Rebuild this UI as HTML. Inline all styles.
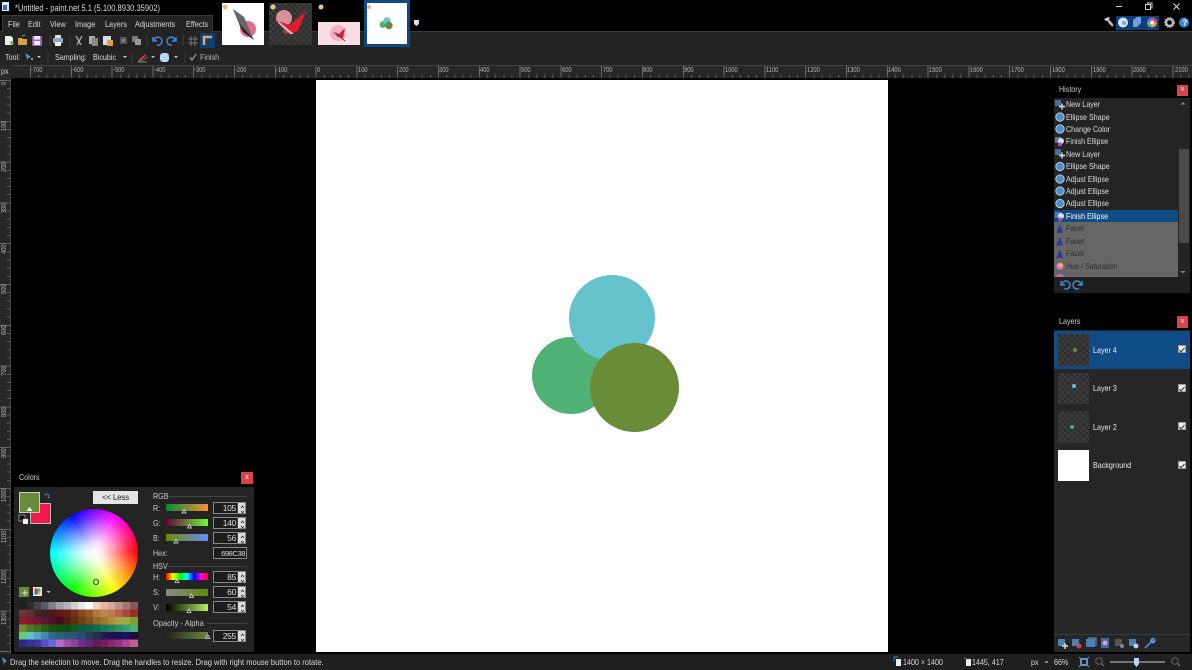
<!DOCTYPE html>
<html><head><meta charset="utf-8"><style>
html,body{margin:0;padding:0;background:#000;width:1192px;height:670px;overflow:hidden}
body{position:relative;font-family:"Liberation Sans",sans-serif;font-size:8.5px;color:#d8d8d8}
.a{position:absolute}
.t{position:absolute;white-space:nowrap;line-height:12px;transform:scaleX(.84);transform-origin:0 50%}
.rl{position:absolute;top:67px;font-size:7px;line-height:8px;color:#b4b4b4;transform:scaleX(.82);transform-origin:0 50%}
.vl{position:absolute;left:1px;font-size:7px;line-height:8px;color:#b4b4b4;transform:rotate(-90deg) scaleX(.82);transform-origin:0 0}
.h{position:absolute;left:1066px;white-space:nowrap;line-height:12px;color:#ddd;transform:scaleX(.84);transform-origin:0 50%}
.hi{position:absolute;left:1066px;white-space:nowrap;line-height:12px;color:#2c2c2c;font-style:italic;transform:scaleX(.84);transform-origin:0 50%}
.sp{position:absolute;left:213px;width:33px;height:12px;background:#1c1c1c;border:1px solid #888;box-sizing:border-box;text-align:right;line-height:11px;color:#ddd;padding-right:9px;font-size:8.5px;letter-spacing:-.3px}
.sp:after{content:"";position:absolute;right:0;top:0;bottom:0;width:7px;background:#ddd;border-left:1px solid #444}
.sl{position:absolute;left:166px;width:42px;height:7px}
.lb{position:absolute;left:1093px;color:#e8e8e8;line-height:12px;white-space:nowrap;transform:scaleX(.84);transform-origin:0 50%}
.ck{position:absolute;left:1178px;width:8px;height:8px;background:#eee;border:1px solid #999;box-sizing:border-box}
.chk{background-image:repeating-conic-gradient(#3b3b3b 0 25%,#2f2f2f 0 50%);background-size:6px 6px}
</style></head><body>

<!-- top chrome -->
<div class="a" style="left:0;top:31px;width:1192px;height:34px;background:#232323"></div>
<div class="a" style="left:0;top:31px;width:1192px;height:1px;background:#3a3a3a"></div>
<div class="a" style="left:2px;top:15px;width:211px;height:17px;background:#232323;border:1px solid #383838;border-bottom:0;box-sizing:border-box"></div>
<div class="t" style="left:15px;top:2px;font-size:9px;color:#ddd">*Untitled - paint.net 5.1 (5.100.8930.35902)</div>
<div class="t" style="left:8px;top:18px;font-size:8.7px">File</div>
<div class="t" style="left:28px;top:18px;font-size:8.7px">Edit</div>
<div class="t" style="left:50px;top:18px;font-size:8.7px">View</div>
<div class="t" style="left:75px;top:18px;font-size:8.7px">Image</div>
<div class="t" style="left:105px;top:18px;font-size:8.7px">Layers</div>
<div class="t" style="left:135px;top:18px;font-size:8.7px">Adjustments</div>
<div class="t" style="left:186px;top:18px;font-size:8.7px">Effects</div>
<div class="t" style="left:5px;top:51px">Tool:</div>
<div class="t" style="left:55px;top:51px">Sampling:</div>
<div class="t" style="left:93px;top:51px">Bicubic</div>
<div class="t" style="left:200px;top:51px;color:#bbb">Finish</div>

<!-- rulers -->
<div class="a" style="left:0;top:65px;width:1192px;height:13px;background:#272727;border-top:1px solid #444;box-sizing:border-box"></div>
<div class="a" style="left:30px;top:66px;width:1162px;height:12px;background-image:repeating-linear-gradient(90deg,#6c6c6c 0 1px,transparent 1px 40.8px)"></div>
<div class="a" style="left:30px;top:75px;width:1162px;height:3px;background-image:repeating-linear-gradient(90deg,#5c5c5c 0 1px,transparent 1px 8.16px)"></div>
<div class="a" style="left:0;top:78px;width:11px;height:576px;background:#272727;border-right:1px solid #444;box-sizing:border-box"></div>
<div class="a" style="left:0;top:80px;width:11px;height:574px;background-image:repeating-linear-gradient(180deg,#6c6c6c 0 1px,transparent 1px 40.8px)"></div>
<div class="a" style="left:7px;top:80px;width:3px;height:574px;background-image:repeating-linear-gradient(180deg,#5c5c5c 0 1px,transparent 1px 8.16px)"></div>
<div class="a" style="left:0;top:65px;width:11px;height:13px;background:#272727"></div>
<div class="t" style="left:1px;top:65px;font-size:8.5px;line-height:12px;color:#ccc">px</div>
<div class="rl" style="left:31px">-700</div><div class="rl" style="left:72px">-600</div><div class="rl" style="left:113px">-500</div><div class="rl" style="left:154px">-400</div><div class="rl" style="left:194px">-300</div><div class="rl" style="left:235px">-200</div><div class="rl" style="left:276px">-100</div><div class="rl" style="left:317px">0</div><div class="rl" style="left:358px">100</div><div class="rl" style="left:399px">200</div><div class="rl" style="left:439px">300</div><div class="rl" style="left:480px">400</div><div class="rl" style="left:521px">500</div><div class="rl" style="left:562px">600</div><div class="rl" style="left:603px">700</div><div class="rl" style="left:643px">800</div><div class="rl" style="left:684px">900</div><div class="rl" style="left:725px">1000</div><div class="rl" style="left:766px">1100</div><div class="rl" style="left:807px">1200</div><div class="rl" style="left:847px">1300</div><div class="rl" style="left:888px">1400</div><div class="rl" style="left:929px">1500</div><div class="rl" style="left:970px">1600</div><div class="rl" style="left:1011px">1700</div><div class="rl" style="left:1052px">1800</div><div class="rl" style="left:1093px">1900</div><div class="rl" style="left:1133px">2000</div><div class="rl" style="left:1175px">2100</div>
<div class="vl" style="top:85px">0</div><div class="vl" style="top:131px">100</div><div class="vl" style="top:172px">200</div><div class="vl" style="top:213px">300</div><div class="vl" style="top:254px">400</div><div class="vl" style="top:294px">500</div><div class="vl" style="top:335px">600</div><div class="vl" style="top:376px">700</div><div class="vl" style="top:417px">800</div><div class="vl" style="top:458px">900</div><div class="vl" style="top:502px">1000</div><div class="vl" style="top:543px">1100</div><div class="vl" style="top:584px">1200</div><div class="vl" style="top:625px">1300</div>

<!-- canvas -->
<div class="a" style="left:316px;top:80px;width:572px;height:572px;background:#fff"></div>
<div class="a" style="left:532px;top:337px;width:78px;height:77px;border-radius:50%;background:#4FB274"></div>
<div class="a" style="left:569px;top:275px;width:86px;height:86px;border-radius:50%;background:#65C3CE"></div>
<div class="a" style="left:589.5px;top:342.5px;width:89px;height:89px;border-radius:50%;background:#698C38"></div>

<!-- thumbnails -->
<div class="a" style="left:222px;top:3px;width:42px;height:42px;background:#fff"></div>
<div class="a chk" style="left:269px;top:3px;width:43px;height:42px"></div>
<div class="a" style="left:318px;top:22px;width:42px;height:23px;background:#fbdde6"></div>
<div class="a" style="left:364px;top:0;width:46px;height:47px;background:#fff;border:3px solid #0c4a84;box-sizing:border-box"></div>

<!-- History panel -->
<div class="a" style="left:1054px;top:80px;width:136px;height:18px;background:#000"></div>
<div class="t" style="left:1059px;top:83px;color:#ccc">History</div>
<div class="a" style="left:1177px;top:85px;width:11px;height:11px;background:#d9444c;color:#fff;text-align:center;font-size:7px;line-height:10px">x</div>
<div class="a" style="left:1054px;top:98px;width:136px;height:195px;background:#242424"></div>
<div class="a" style="left:1054px;top:209.5px;width:124px;height:12.5px;background:#0f4c85"></div>
<div class="a" style="left:1054px;top:222px;width:124px;height:55px;background:#666"></div>
<div class="a" style="left:1179px;top:149px;width:10px;height:94px;background:#4a4a4a"></div>
<div class="a" style="left:1054px;top:277px;width:136px;height:16px;background:#1f1f1f"></div>
<div class="h" style="top:98px">New Layer</div><div class="h" style="top:111px">Ellipse Shape</div><div class="h" style="top:123px">Change Color</div><div class="h" style="top:135px">Finish Ellipse</div><div class="h" style="top:148px">New Layer</div><div class="h" style="top:160px">Ellipse Shape</div><div class="h" style="top:173px">Adjust Ellipse</div><div class="h" style="top:185px">Adjust Ellipse</div><div class="h" style="top:197px">Adjust Ellipse</div><div class="h" style="top:210px;color:#fff">Finish Ellipse</div>
<div class="hi" style="top:222px">Facet</div><div class="hi" style="top:235px">Facet</div><div class="hi" style="top:247px">Facet</div><div class="hi" style="top:260px">Hue / Saturation</div>

<!-- Layers panel -->
<div class="a" style="left:1054px;top:312px;width:136px;height:18px;background:#000"></div>
<div class="t" style="left:1059px;top:315px;color:#ccc">Layers</div>
<div class="a" style="left:1177px;top:316px;width:11px;height:12px;background:#d9444c;color:#fff;text-align:center;font-size:7px;line-height:11px">x</div>
<div class="a" style="left:1054px;top:330px;width:136px;height:322px;background:#262626"></div>
<div class="a" style="left:1054px;top:331px;width:136px;height:38px;background:#0f4c85"></div>
<div class="a" style="left:1054px;top:634px;width:136px;height:1px;background:#3a3a3a"></div>
<div class="a chk" style="left:1058px;top:334px;width:31px;height:32px"></div>
<div class="a chk" style="left:1058px;top:373px;width:31px;height:31px"></div>
<div class="a chk" style="left:1058px;top:411px;width:31px;height:32px"></div>
<div class="a" style="left:1058px;top:450px;width:31px;height:31px;background:#fff"></div>
<div class="a" style="left:1073px;top:348px;width:4px;height:4px;border-radius:50%;background:#698C38"></div>
<div class="a" style="left:1072px;top:384px;width:4px;height:4px;border-radius:50%;background:#65C3CE"></div>
<div class="a" style="left:1070px;top:425px;width:4px;height:4px;border-radius:50%;background:#4FB274"></div>
<div class="lb" style="top:344px">Layer 4</div><div class="lb" style="top:382px">Layer 3</div><div class="lb" style="top:421px">Layer 2</div><div class="lb" style="top:459px">Background</div>
<div class="ck" style="top:345px"></div><div class="ck" style="top:384px"></div><div class="ck" style="top:422px"></div><div class="ck" style="top:461px"></div>

<!-- Colors panel -->
<div class="a" style="left:14px;top:467px;width:240px;height:20px;background:#000"></div>
<div class="t" style="left:19px;top:471px;color:#ccc">Colors</div>
<div class="a" style="left:241px;top:472px;width:12px;height:12px;background:#d9444c;color:#fff;text-align:center;font-size:7px;line-height:11px">x</div>
<div class="a" style="left:14px;top:487px;width:240px;height:165px;background:#242424"></div>
<div class="a" style="left:30px;top:503px;width:21px;height:21px;background:#f5184f;border:1px solid #bbb;box-sizing:border-box"></div>
<div class="a" style="left:19px;top:492px;width:21px;height:21px;background:#698C38;border:1px solid #ccc;box-sizing:border-box"></div>
<div class="a" style="left:93px;top:491px;width:45px;height:13px;background:#e4e4e4;color:#222;text-align:center;line-height:13px;font-size:8px;letter-spacing:-.2px">&lt;&lt; Less</div>
<div class="a" style="left:49.5px;top:509px;width:88px;height:88px;border-radius:50%;background:radial-gradient(circle closest-side,#fff 0,rgba(255,255,255,.88) 22%,rgba(255,255,255,.55) 50%,rgba(255,255,255,.18) 80%,rgba(255,255,255,0) 100%),conic-gradient(from 0deg,#8000ff 0deg,#f0f 30deg,#f00 90deg,#ff0 150deg,#0f0 210deg,#0ff 270deg,#00f 330deg,#8000ff 360deg)"></div>
<div class="a" style="left:93px;top:579px;width:6px;height:6px;border-radius:50%;border:1px solid #333;box-sizing:border-box"></div>

<!-- palette -->
<svg class="a" style="left:19px;top:602px" width="119" height="45" shape-rendering="crispEdges">
<g transform="translate(0,0)"><rect x="0" width="7.5" height="7.5" fill="#1e1e22"/><rect x="7.4" width="7.5" height="7.5" fill="#2a2a30"/><rect x="14.8" width="7.5" height="7.5" fill="#44444c"/><rect x="22.2" width="7.5" height="7.5" fill="#5c5c66"/><rect x="29.6" width="7.5" height="7.5" fill="#80808a"/><rect x="37" width="7.5" height="7.5" fill="#a0a0a8"/><rect x="44.4" width="7.5" height="7.5" fill="#b4b4bc"/><rect x="51.8" width="7.5" height="7.5" fill="#d0d0d4"/><rect x="59.2" width="7.5" height="7.5" fill="#e8e8ea"/><rect x="66.6" width="7.5" height="7.5" fill="#fff"/><rect x="74" width="7.5" height="7.5" fill="#f8d0b8"/><rect x="81.4" width="7.5" height="7.5" fill="#e8b8a0"/><rect x="88.8" width="7.5" height="7.5" fill="#d4a898"/><rect x="96.2" width="7.5" height="7.5" fill="#c09088"/><rect x="103.6" width="7.5" height="7.5" fill="#a07870"/><rect x="111" width="8" height="7.5" fill="#885858"/></g>
<g transform="translate(0,7.5)"><rect x="0" width="7.5" height="7.5" fill="#6a3838"/><rect x="7.4" width="7.5" height="7.5" fill="#5a3030"/><rect x="14.8" width="7.5" height="7.5" fill="#402428"/><rect x="22.2" width="7.5" height="7.5" fill="#38201e"/><rect x="29.6" width="7.5" height="7.5" fill="#501414"/><rect x="37" width="7.5" height="7.5" fill="#601818"/><rect x="44.4" width="7.5" height="7.5" fill="#6a2010"/><rect x="51.8" width="7.5" height="7.5" fill="#7a3018"/><rect x="59.2" width="7.5" height="7.5" fill="#8a4820"/><rect x="66.6" width="7.5" height="7.5" fill="#9a5828"/><rect x="74" width="7.5" height="7.5" fill="#b07840"/><rect x="81.4" width="7.5" height="7.5" fill="#b88850"/><rect x="88.8" width="7.5" height="7.5" fill="#c07858"/><rect x="96.2" width="7.5" height="7.5" fill="#b86050"/><rect x="103.6" width="7.5" height="7.5" fill="#a84838"/><rect x="111" width="8" height="7.5" fill="#983028"/></g>
<g transform="translate(0,15)"><rect x="0" width="7.5" height="7.5" fill="#8a1830"/><rect x="7.4" width="7.5" height="7.5" fill="#801830"/><rect x="14.8" width="7.5" height="7.5" fill="#701830"/><rect x="22.2" width="7.5" height="7.5" fill="#601830"/><rect x="29.6" width="7.5" height="7.5" fill="#501030"/><rect x="37" width="7.5" height="7.5" fill="#400c20"/><rect x="44.4" width="7.5" height="7.5" fill="#502008"/><rect x="51.8" width="7.5" height="7.5" fill="#603010"/><rect x="59.2" width="7.5" height="7.5" fill="#704010"/><rect x="66.6" width="7.5" height="7.5" fill="#805018"/><rect x="74" width="7.5" height="7.5" fill="#906828"/><rect x="81.4" width="7.5" height="7.5" fill="#a07830"/><rect x="88.8" width="7.5" height="7.5" fill="#a89038"/><rect x="96.2" width="7.5" height="7.5" fill="#b0a048"/><rect x="103.6" width="7.5" height="7.5" fill="#a0a848"/><rect x="111" width="8" height="7.5" fill="#80a030"/></g>
<g transform="translate(0,22.5)"><rect x="0" width="7.5" height="7.5" fill="#6a9030"/><rect x="7.4" width="7.5" height="7.5" fill="#507828"/><rect x="14.8" width="7.5" height="7.5" fill="#3a7020"/><rect x="22.2" width="7.5" height="7.5" fill="#2a6018"/><rect x="29.6" width="7.5" height="7.5" fill="#1e5010"/><rect x="37" width="7.5" height="7.5" fill="#185010"/><rect x="44.4" width="7.5" height="7.5" fill="#105018"/><rect x="51.8" width="7.5" height="7.5" fill="#105828"/><rect x="59.2" width="7.5" height="7.5" fill="#0e5a40"/><rect x="66.6" width="7.5" height="7.5" fill="#0e6048"/><rect x="74" width="7.5" height="7.5" fill="#106850"/><rect x="81.4" width="7.5" height="7.5" fill="#207858"/><rect x="88.8" width="7.5" height="7.5" fill="#288060"/><rect x="96.2" width="7.5" height="7.5" fill="#309068"/><rect x="103.6" width="7.5" height="7.5" fill="#38a070"/><rect x="111" width="8" height="7.5" fill="#48b078"/></g>
<g transform="translate(0,30)"><rect x="0" width="7.5" height="7.5" fill="#60c880"/><rect x="7.4" width="7.5" height="7.5" fill="#60c0d0"/><rect x="14.8" width="7.5" height="7.5" fill="#58a0c8"/><rect x="22.2" width="7.5" height="7.5" fill="#4888b0"/><rect x="29.6" width="7.5" height="7.5" fill="#306888"/><rect x="37" width="7.5" height="7.5" fill="#286080"/><rect x="44.4" width="7.5" height="7.5" fill="#285878"/><rect x="51.8" width="7.5" height="7.5" fill="#305078"/><rect x="59.2" width="7.5" height="7.5" fill="#304870"/><rect x="66.6" width="7.5" height="7.5" fill="#2c3860"/><rect x="74" width="7.5" height="7.5" fill="#282c50"/><rect x="81.4" width="7.5" height="7.5" fill="#241850"/><rect x="88.8" width="7.5" height="7.5" fill="#201050"/><rect x="96.2" width="7.5" height="7.5" fill="#181050"/><rect x="103.6" width="7.5" height="7.5" fill="#201060"/><rect x="111" width="8" height="7.5" fill="#180c40"/></g>
<g transform="translate(0,37.5)"><rect x="0" width="7.5" height="7.5" fill="#302888"/><rect x="7.4" width="7.5" height="7.5" fill="#383090"/><rect x="14.8" width="7.5" height="7.5" fill="#4038a0"/><rect x="22.2" width="7.5" height="7.5" fill="#5050c0"/><rect x="29.6" width="7.5" height="7.5" fill="#6868d8"/><rect x="37" width="7.5" height="7.5" fill="#b868c8"/><rect x="44.4" width="7.5" height="7.5" fill="#a050a8"/><rect x="51.8" width="7.5" height="7.5" fill="#8c4498"/><rect x="59.2" width="7.5" height="7.5" fill="#703088"/><rect x="66.6" width="7.5" height="7.5" fill="#602878"/><rect x="74" width="7.5" height="7.5" fill="#681858"/><rect x="81.4" width="7.5" height="7.5" fill="#781c58"/><rect x="88.8" width="7.5" height="7.5" fill="#882868"/><rect x="96.2" width="7.5" height="7.5" fill="#983080"/><rect x="103.6" width="7.5" height="7.5" fill="#b04098"/><rect x="111" width="8" height="7.5" fill="#c06090"/></g>
</svg>

<!-- color sliders -->
<div class="t" style="left:153px;top:490px;color:#ccc">RGB</div><div class="a" style="left:168px;top:496px;width:79px;height:1px;background:#444"></div>
<div class="t" style="left:153px;top:502px;color:#ccc">R:</div><div class="t" style="left:153px;top:517px;color:#ccc">G:</div><div class="t" style="left:153px;top:532px;color:#ccc">B:</div><div class="t" style="left:153px;top:547px;color:#ccc">Hex:</div>
<div class="t" style="left:153px;top:560px;color:#ccc">HSV</div><div class="a" style="left:168px;top:566px;width:79px;height:1px;background:#444"></div>
<div class="t" style="left:153px;top:571px;color:#ccc">H:</div><div class="t" style="left:153px;top:586px;color:#ccc">S:</div><div class="t" style="left:153px;top:601px;color:#ccc">V:</div>
<div class="t" style="left:153px;top:617px;color:#ccc;transform:scaleX(.88)">Opacity - Alpha</div><div class="a" style="left:207px;top:623px;width:40px;height:1px;background:#444"></div>
<div class="sl" style="top:504px;background:linear-gradient(90deg,#008c38,#ff8c38)"></div>
<div class="sl" style="top:519px;background:linear-gradient(90deg,#690038,#69ff38)"></div>
<div class="sl" style="top:534px;background:linear-gradient(90deg,#698c00,#698cff)"></div>
<div class="sl" style="top:573px;background:linear-gradient(90deg,#f00,#ff0,#0f0,#0ff,#00f,#f0f,#f00)"></div>
<div class="sl" style="top:589px;background:linear-gradient(90deg,#8a8a8a,#5f8c00)"></div>
<div class="sl" style="top:604px;background:linear-gradient(90deg,#000,#b6f060)"></div>
<div class="sl" style="top:632px;background:linear-gradient(90deg,#242424,#698C38)"></div>
<div class="sp" style="top:502px">105</div><div class="sp" style="top:517px">140</div><div class="sp" style="top:532px">56</div>
<div class="a" style="left:213px;top:547px;width:34px;height:12px;background:#1c1c1c;border:1px solid #888;box-sizing:border-box;text-align:right;line-height:11px;padding-right:1px;font-size:7.5px;letter-spacing:-.4px">698C38</div>
<div class="sp" style="top:571px">85</div><div class="sp" style="top:586px">60</div><div class="sp" style="top:601px">54</div><div class="sp" style="top:630px">255</div>

<!-- status bar -->
<div class="a" style="left:0;top:654px;width:1192px;height:16px;background:#1f1f1f"></div>
<div class="t" style="left:10px;top:656px;transform:scaleX(.885)">Drag the selection to move. Drag the handles to resize. Drag with right mouse button to rotate.</div>
<div class="t" style="left:903px;top:656px">1400 × 1400</div>
<div class="t" style="left:972px;top:656px">1445, 417</div>
<div class="t" style="left:1031px;top:656px">px</div>
<div class="t" style="left:1054px;top:656px">66%</div>

<!-- icons -->
<svg class="a" style="left:0;top:0" width="1192" height="670">
<!-- app icon -->
<rect x="2" y="2" width="7" height="9" fill="#dfe8f5"/><rect x="3" y="5" width="4" height="5" fill="#3a6fb5"/>
<!-- toolbar row 1 -->
<path d="M5 36h6l2 2v7H5z" fill="#eee"/><path d="M10 43h4M12 41v4" stroke="#5ab04a" stroke-width="1.5"/>
<path d="M18 38h4l1 1h4v6h-9z" fill="#d9a04a"/><path d="M22 36l3-1" stroke="#4aa0e0"/>
<rect x="32" y="36" width="10" height="10" rx="1" fill="#9a62c8"/><rect x="34" y="36" width="6" height="3.5" fill="#eee"/><rect x="34" y="41" width="6" height="4" fill="#eee"/>
<rect x="55" y="35" width="6" height="3" fill="#ddd"/><rect x="53" y="38" width="10" height="5" fill="#8aa8c8"/><rect x="55" y="42" width="6" height="4" fill="#eee"/>
<path d="M76 36l5 9M82 36l-5 9" stroke="#aaa" stroke-width="1.3" fill="none"/>
<rect x="89" y="36" width="6" height="8" fill="#aaa"/><rect x="92" y="38" width="6" height="8" fill="#888"/>
<rect x="103" y="36" width="8" height="9" fill="#ddd"/><rect x="107" y="40" width="6" height="6" fill="#e0a040"/>
<rect x="120" y="37" width="7" height="7" fill="#555"/><rect x="122" y="39" width="3" height="3" fill="#888"/>
<rect x="132" y="36" width="6" height="6" fill="#777"/><rect x="135" y="39" width="6" height="6" fill="#999"/>
<path d="M154 41a4 4 0 1 1 3 4M153 37v4h4" stroke="#3f86cf" stroke-width="1.5" fill="none"/>
<path d="M175 41a4 4 0 1 0-3 4M176 37v4h-4" stroke="#3f86cf" stroke-width="1.5" fill="none"/>
<path d="M191 36v10M195 36v10M188 39h10M188 43h10" stroke="#777"/>
<rect x="200" y="33" width="15" height="15" fill="#0f4070"/><path d="M204 45v-8h8" stroke="#d8a868" stroke-width="2.5" fill="none"/>
<!-- separators -->
<path d="M50 35v11M70 35v11M147 35v11M183 35v11M48 53v10M132 53v10M185 53v10" stroke="#3c3c3c"/>
<!-- tool row -->
<path d="M25 53l6 4-3 1 0 3z" fill="#4f96dc"/><path d="M31 59h2M32 58v2" stroke="#bbb"/>
<path d="M37 56l2 2 2-2zM123 56l2 2 2-2zM151 56l2 2 2-2zM174 56l2 2 2-2z" fill="#ccc"/>
<path d="M138 62l8-7M140 62l8-5M139 60l6-5" stroke="#c44" fill="none"/><path d="M138 62h9" stroke="#4a8" fill="none"/>
<rect x="160" y="53" width="9" height="9" rx="3" fill="#b5d7f5"/>
<path d="M190 57l2 3 4-6" stroke="#999" stroke-width="1.2" fill="none"/>
<!-- shape dots on thumbnails -->
<circle cx="225" cy="7" r="2.5" fill="#e8b67a"/><circle cx="273" cy="7" r="2.5" fill="#e8c890"/><circle cx="321" cy="7" r="2.5" fill="#e8c890"/><circle cx="369" cy="7" r="2" fill="#e8b67a"/>
<!-- thumb 1 -->
<circle cx="248" cy="29" r="8" fill="#ea6a8a"/><path d="M233 9l11 8 10 23-13-11z" fill="#666"/><path d="M233 9l6 14 15 17-11-8z" fill="#222"/>
<!-- thumb 2 -->
<circle cx="284" cy="18" r="8" fill="#d8909c"/><path d="M275 20l15 5 16-14-8 20-8 3-6-6z" fill="#e01c30"/><path d="M277 20l17 14-4 0-10-9z" fill="#ddb8c0"/><path d="M283 29l8 5-8-1z" fill="#b33"/>
<!-- thumb 3 -->
<circle cx="338" cy="33" r="8" fill="#f0b0c0"/><path d="M333 32l6 2 6-6-2 10-5-1z" fill="#d81f3c"/><path d="M336 33l9 8" stroke="#444"/>
<!-- thumb 4 -->
<circle cx="383" cy="24.5" r="3.4" fill="#4FB274"/><circle cx="387" cy="21" r="3.7" fill="#65C3CE"/><circle cx="389" cy="25.5" r="3.7" fill="#698C38"/>
<path d="M414 20h5v4l-2.5 2-2.5-2z" fill="#dde"/>
<!-- window buttons -->
<path d="M1116 6.500h6" stroke="#ccc"/><rect x="1145.5" y="4.5" width="5" height="5" fill="none" stroke="#ccc"/><path d="M1147.5 4.5v-1.5h4.500v5h-1.500" fill="none" stroke="#ccc"/><path d="M1173.5 3.5l6 6M1179.5 3.5l-6 6" stroke="#ddd"/>
<!-- top right icons -->
<path d="M1105 19l6 6 2-1-5-6z" fill="#aaa"/><path d="M1104 19l5-2 1 1-4 3z" fill="#ddd"/><path d="M1109 22l4 4" stroke="#bbb" stroke-width="2"/>
<rect x="1116" y="16" width="43" height="14" fill="#0f3f78"/>
<circle cx="1123" cy="22.5" r="5" fill="#dbe7f5"/><circle cx="1124" cy="23" r="2" fill="#7aa0d0"/>
<path d="M1133 26v-6l4-3h4v6l-4 4h-4z" fill="#6f9fd8"/>
<circle cx="1152" cy="22.5" r="5" fill="#f2a040"/><path d="M1152 17.5a5 5 0 0 1 5 5h-5z" fill="#e04a6a"/><path d="M1147 22.5a5 5 0 0 0 5 5v-5z" fill="#50c070"/><path d="M1147 22.5a5 5 0 0 1 5-5v5z" fill="#6070e0"/><circle cx="1152" cy="22.5" r="2" fill="#eee"/>
<circle cx="1169.5" cy="22.5" r="3.5" fill="none" stroke="#bbb" stroke-width="2.4"/><circle cx="1169.5" cy="22.5" r="5" fill="none" stroke="#aaa" stroke-width="1" stroke-dasharray="1.5 1.5"/>
<circle cx="1184" cy="22.5" r="5" fill="#3f86cf"/><text x="1182.3" y="25.5" font-size="8" font-weight="bold" fill="#fff" font-family="Liberation Sans,sans-serif">?</text>
<!-- history icons -->
<g fill="#4f8ec8" stroke="#b8d4ee" stroke-width=".9">
<circle cx="1060" cy="117" r="4.2"/><circle cx="1060" cy="129" r="4.2"/><circle cx="1060" cy="166.500" r="4.2"/><circle cx="1060" cy="179" r="4.2"/><circle cx="1060" cy="191" r="4.2"/><circle cx="1060" cy="203.500" r="4.2"/>
</g>
<g><rect x="1055" y="100" width="6" height="6" fill="#4a6d9c"/><path d="M1059 106.500h6M1062 103.500v6" stroke="#ddd" stroke-width="1.4"/><rect x="1055" y="149" width="6" height="6" fill="#4a6d9c"/><path d="M1059 155.500h6M1062 152.500v6" stroke="#ddd" stroke-width="1.4"/></g>
<g><rect x="1055" y="137" width="6" height="6" fill="#5577aa"/><circle cx="1061" cy="141" r="3" fill="#ddd"/><circle cx="1060" cy="144.500" r="2" fill="#a050c0"/><rect x="1055" y="212" width="6" height="6" fill="#5577aa"/><circle cx="1061" cy="216" r="3" fill="#ddd"/><circle cx="1060" cy="219.500" r="2" fill="#a050c0"/></g>
<g fill="#2a3f9c"><path d="M1060 224l3 9h-7zM1060 236.500l3 9h-7zM1060 249l3 9h-7z"/></g>
<circle cx="1060" cy="266" r="3.5" fill="#e87ab0"/><circle cx="1061" cy="265" r="1.5" fill="#e8d050"/>
<path d="M1056 277a4 3 0 0 1 8 0z" fill="#d060c0"/>
<path d="M1183 102l-2.500 2.500h5zM1183 273.500l-2.500-2.500h5z" fill="#888"/>
<path d="M1062 285a4 4 0 1 1 2 3.500M1061 281v4h4" stroke="#3f86cf" stroke-width="1.5" fill="none"/>
<path d="M1081 285a4 4 0 1 0-2 3.500M1082 281v4h-4" stroke="#3f86cf" stroke-width="1.5" fill="none"/>
<!-- check marks -->
<path d="M1179.500 350l1.500 2 3.500-4M1179.500 389l1.500 2 3.500-4M1179.500 427l1.500 2 3.500-4M1179.500 466l1.500 2 3.500-4" stroke="#333" fill="none"/>
<!-- layer footer -->
<rect x="1058" y="639" width="7" height="7" fill="#4e7fb5"/><path d="M1062 646h6M1065 643v6" stroke="#cfe8cf" stroke-width="1.4"/>
<rect x="1072" y="639" width="7" height="7" fill="#4e7fb5"/><circle cx="1079" cy="646" r="2.5" fill="#d84040"/>
<rect x="1086" y="639" width="9" height="8" fill="#4e7fb5"/><path d="M1088 638h8v8" stroke="#6f9bcd" fill="none"/>
<rect x="1101" y="638" width="8" height="10" fill="#4468a0"/><circle cx="1105" cy="643" r="2.5" fill="#d6a0e0"/>
<rect x="1115" y="639" width="7" height="7" fill="#555"/><circle cx="1122" cy="646" r="2" fill="#888"/>
<rect x="1129" y="639" width="7" height="7" fill="#4e7fb5"/><circle cx="1136" cy="646" r="2.5" fill="#b8d4ee"/>
<path d="M1145 648l6-6M1151 642a2.500 2.500 0 0 1 2.500-3.500l-2 2 1.500 1.500 2-2a2.500 2.500 0 0 1-3.500 2.500" stroke="#4f96dc" stroke-width="1.5" fill="none"/>
<!-- colors panel icons -->
<path d="M45 494a3 3 0 0 1 4 3" stroke="#3a6ea8" stroke-width="1.3" fill="none"/><path d="M44 495l2-2v3zM47 497h3l-1.500 2z" fill="#3a6ea8"/>
<rect x="19" y="515" width="6" height="6" fill="#111" stroke="#ccc" stroke-width=".6"/><rect x="23" y="519" width="5" height="5" fill="#fff"/>
<path d="M29.500 507l-3 4h6z" fill="#fff"/>
<rect x="19" y="587" width="10" height="10" fill="#698C38"/><path d="M22 593h6M25 590v6" stroke="#ddd"/>
<rect x="33" y="587" width="9" height="9" fill="#eee"/><rect x="34.500" y="588.500" width="3" height="3" fill="#d33"/><rect x="37.500" y="588.500" width="3" height="3" fill="#3c6"/><rect x="34.500" y="591.500" width="3" height="3" fill="#36c"/><rect x="37.500" y="591.500" width="3" height="3" fill="#db3"/>
<path d="M46.500 591l2 2 2-2z" fill="#ccc"/>
<!-- slider markers -->
<g fill="#242424" stroke="#ddd" stroke-width=".8"><path d="M184 509.500l-2 3.500h4zM189.500 524.500l-2 3.500h4zM176 539.500l-2 3.500h4zM177 579l-2 3.500h4zM191.500 594l-2 3.500h4zM189 609l-2 3.500h4zM208 635l-2 3.500h4z"/></g>
<g stroke="#222" stroke-width=".7"><path d="M241 508l1.500-2 1.500 2M241 511l1.500 2 1.500-2M241 523l1.500-2 1.500 2M241 526l1.500 2 1.500-2M241 538l1.500-2 1.500 2M241 541l1.500 2 1.500-2M241 577l1.500-2 1.500 2M241 580l1.500 2 1.500-2M241 592l1.500-2 1.500 2M241 595l1.500 2 1.500-2M241 607l1.500-2 1.500 2M241 610l1.500 2 1.500-2M241 636l1.500-2 1.500 2M241 639l1.500 2 1.500-2" fill="none"/></g>
<!-- status icons -->
<path d="M2 657l5 4-2.500 1-.5 3z" fill="#4f96dc"/>
<rect x="896" y="659" width="5" height="7" fill="#eee"/><path d="M894 657h4M894 657v4" stroke="#3f86cf"/>
<rect x="966" y="659" width="5" height="7" fill="#eee"/><path d="M964 658l2 0" stroke="#3f86cf"/>
<path d="M1045 662h3" stroke="#aaa" stroke-width="1.5"/>
<rect x="1081" y="659" width="6" height="6" fill="none" stroke="#8ab4e0" stroke-width="1.5"/><path d="M1079 657l3 3M1089 657l-3 3M1079 667l3-3M1089 667l-3-3" stroke="#4f96dc"/>
<circle cx="1099" cy="661" r="3.3" fill="none" stroke="#666"/><path d="M1101.500 663.500l2.500 2.500" stroke="#666" stroke-width="1.4"/>
<path d="M1110 662h55" stroke="#ccc" stroke-width="1"/><path d="M1134 658h5v6l-2.500 3-2.500-3z" fill="#b5d7f5"/>
<circle cx="1175" cy="661" r="3.3" fill="none" stroke="#666"/><path d="M1177.500 663.500l2.500 2.500" stroke="#666" stroke-width="1.4"/>
</svg>
</body></html>
